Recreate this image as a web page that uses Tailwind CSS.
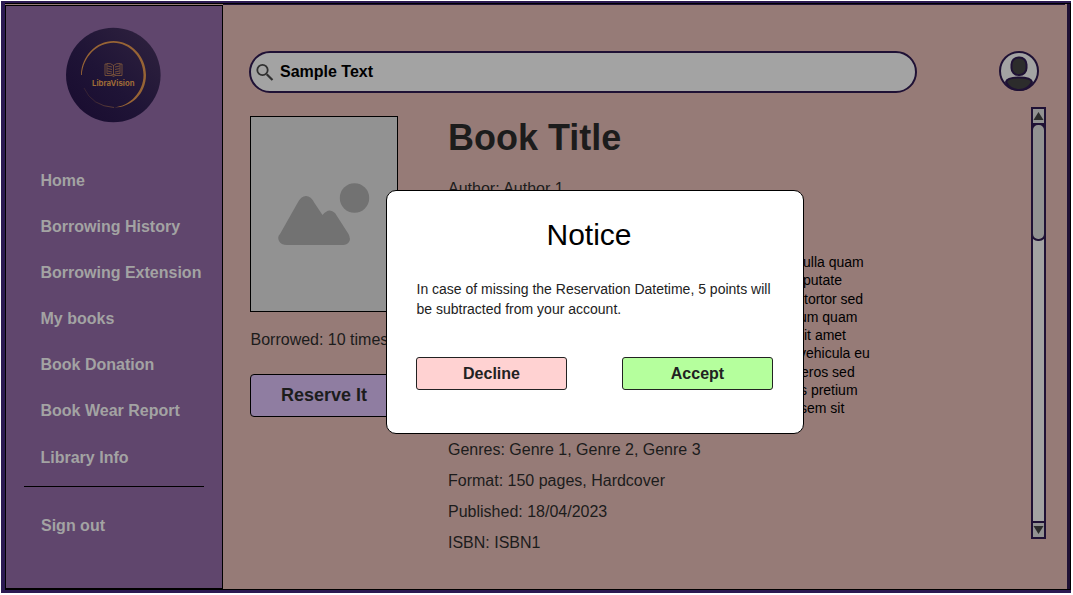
<!DOCTYPE html>
<html lang="en">
<head>
<meta charset="utf-8">
<title>LibraVision</title>
<script src="https://cdn.jsdelivr.net/npm/@tailwindcss/browser@4"></script>
</head>
<body class="bg-white font-['Liberation_Sans',Arial,sans-serif]">
<div class="relative w-[1073px] h-[595px] overflow-hidden pt-px pl-px">
  <div class="w-[1070px] h-[592px] bg-[#2b1a52] pl-1 pt-[2px]">
    <div class="flex w-[1066px] h-[587px] bg-[#967b77] border-t border-b border-black border-r">
      <aside class="w-[218px] h-[584px] mt-px shrink-0 bg-[#60466d] border border-black text-[#a3a3a3] font-bold text-base">
        <svg class="block ml-[60px] mt-[21px]" width="95" height="96" viewBox="0 0 95 96">
          <defs>
            <linearGradient id="disc" x1="0" y1="1" x2="1" y2="0"><stop offset="0" stop-color="#180b2f"/><stop offset=".45" stop-color="#1f1436"/><stop offset="1" stop-color="#30233f"/></linearGradient>
            <linearGradient id="ring" x1="0" y1=".7" x2=".6" y2=".5"><stop offset="0" stop-color="#a06b38" stop-opacity=".15"/><stop offset="1" stop-color="#a57039"/></linearGradient>
          </defs>
          <circle cx="47.300" cy="48" r="47.300" fill="url(#disc)"/>
          <path d="M15 48C15.500 29 30 14 47.500 14S80 29 80 48S65 80.500 48 80.500C64 79 77.500 65 77.500 48S64 15.800 47.500 15.800S17 30 15.800 48Z" fill="#976435"/>
          <path d="M18 61Q26 79 48 80.500" fill="none" stroke="url(#ring)" stroke-width=".6" opacity=".7"/>
          <g fill="none" stroke="#8a5d3b" stroke-width=".75"><path d="M41 37H39V48.500H46L47.500 49.500L49 48.500H56V37H54M41 36.500Q45 36 47.500 38.500Q50 36 54 36.500V46.500Q50 46 47.500 48Q45 46 41 46.500ZM47.500 38.500V48M41.500 39L46 40M41.500 41.500L46 42.500M41.500 44L46 45M53.500 39L49 40M53.500 41.500L49 42.500M53.500 44L49 45"/></g>
          <text x="26" y="58.500" textLength="42.500" lengthAdjust="spacingAndGlyphs" font-family="Inter,sans-serif" font-weight="700" font-size="7.500" fill="#9f6b37">LibraVision</text>
        </svg>
        <nav class="pl-[34.500px] pt-[46px] leading-[24px] flex flex-col gap-[22px] whitespace-nowrap">
          <a>Home</a><a>Borrowing History</a><a>Borrowing Extension</a><a>My books</a><a>Book Donation</a><a>Book Wear Report</a><a class="mt-px">Library Info</a>
        </nav>
        <hr class="border-0 h-px bg-black w-[180px] ml-[18px] mt-[16px]">
        <a class="block ml-[35px] mt-[27px] leading-[24px]">Sign out</a>
      </aside>
      <main class="w-[842px] shrink-0 pl-[26px] border-t border-[#1f1135]">
        <header class="flex items-start pt-[46px]">
          <div class="flex items-center w-[668px] h-[42px] rounded-full border-2 border-[#1f1135] bg-[#a3a3a3] pl-[4px]">
            <svg width="20" height="20" viewBox="0 0 20 20" fill="none" stroke="#303030" class="mt-[2px]"><circle cx="7.500" cy="7" r="5.200" stroke-width="1.800"/><path d="M11.700 11.200L17.500 17" stroke-width="2.200"/></svg>
            <span class="ml-[5px] font-bold text-base text-black">Sample Text</span>
          </div>
          <svg class="ml-[82px]" width="40" height="40" viewBox="0 0 40 40"><circle cx="20" cy="20" r="19" fill="#a3a3a3" stroke="#1f1135" stroke-width="2"/><path d="M7 31Q8 26.500 20 26.500T33 31Q29 39 20 39T7 31Z" fill="#2c2c2c" stroke="#1f1135" stroke-width="2"/><rect x="12.500" y="6.500" width="15" height="17.500" rx="7" fill="#2c2c2c" stroke="#1f1135" stroke-width="2"/></svg>
        </header>
        <div class="flex">
          <section class="w-[199px] shrink-0 pt-[23px] pl-px">
            <div class="w-[148px] h-[196px] bg-[#929292] border border-black">
              <svg width="146" height="194" viewBox="0 0 146 194" fill="#727272"><circle cx="103.500" cy="81" r="14.700"/><path d="M29 117L46.500 86Q50 79 55 79T63.500 86L71.500 98Q78 90 84 96L97.500 117Q100 122 98 125Q96 128 92 128H36Q30 128 28 124T29 117Z"/></svg>
            </div>
            <p class="mt-[16px] ml-[0.500px] h-6 leading-6 text-base text-[#1c1c1c] whitespace-nowrap">Borrowed: 10 times</p>
            <button class="block mt-[22px] w-[148px] h-[43px] rounded-[4px] border border-black bg-[#8f7da1] font-bold text-lg leading-[39px] text-[#1c1c1c]">Reserve It</button>
          </section>
          <article class="w-[583px] shrink-0 text-[#1c1c1c] text-base">
            <h1 class="font-bold text-[36px] leading-[42px] pt-[24px]">Book Title</h1>
            <p class="mt-[18px] h-6 leading-6">Author: Author 1</p>
            <div class="mt-[52px] h-[165px] pl-[354px] text-sm leading-[18.250px] text-black whitespace-nowrap">
              <p class="pl-px">ulla quam</p><p class="pl-px">putate</p><p class="pl-[2px]">tortor sed</p><p class="-ml-[3px]">um quam</p><p class="pl-[2px]">it amet</p><p class="-ml-[3px]">vehicula eu</p><p class="-ml-px">eros sed</p><p class="-ml-[2px]">s pretium</p><p class="-ml-[2px]">sem sit</p>
            </div>
            <div class="mt-[16px] leading-[31px]"><p>Genres: Genre 1, Genre 2, Genre 3</p><p>Format: 150 pages, Hardcover</p><p>Published: 18/04/2023</p><p>ISBN: ISBN1</p></div>
          </article>
          <svg class="mt-[14px] shrink-0" width="15" height="432" viewBox="0 0 15 432"><rect x="1" y="1" width="13" height="430" fill="#a3a3a3" stroke="#1f1135" stroke-width="2"/><path d="M2 2h11v14H2zM2 415h11v15H2z" fill="#929292"/><rect x="1" y="17" width="13" height="116" rx="6" fill="#929292" stroke="#1f1135" stroke-width="2"/><path d="M1 17H14M1 415H14" stroke="#1f1135" stroke-width="2"/><path d="M7.500 5L12.500 13H2.500ZM7.500 427L12.500 419H2.500Z" fill="#2c2c2c"/></svg>
        </div>
      </main>
      <div class="w-[3px] bg-[#1f1135] ml-auto"></div>
    </div>
  </div>
  <div role="dialog" class="absolute left-[386px] top-[190px] w-[418px] h-[244px] bg-white border border-black rounded-[10px] px-[29px] pt-[26px]">
    <h2 class="text-[30px] leading-[36px] text-center text-black pr-[12px]">Notice</h2>
    <p class="mt-[26px] ml-[0.500px] text-sm leading-[20px] text-[#222] whitespace-nowrap">In case of missing the Reservation Datetime, 5 points will<br>be subtracted from your account.</p>
    <div class="flex gap-[55px] mt-[38px] font-bold text-base text-[#222]">
      <button class="w-[151px] h-[33px] rounded-[3px] border border-[#222] bg-[#ffd2d2]">Decline</button>
      <button class="w-[151px] h-[33px] rounded-[3px] border border-[#222] bg-[#b5ff9d]">Accept</button>
    </div>
  </div>
</div>
</body>
</html>
